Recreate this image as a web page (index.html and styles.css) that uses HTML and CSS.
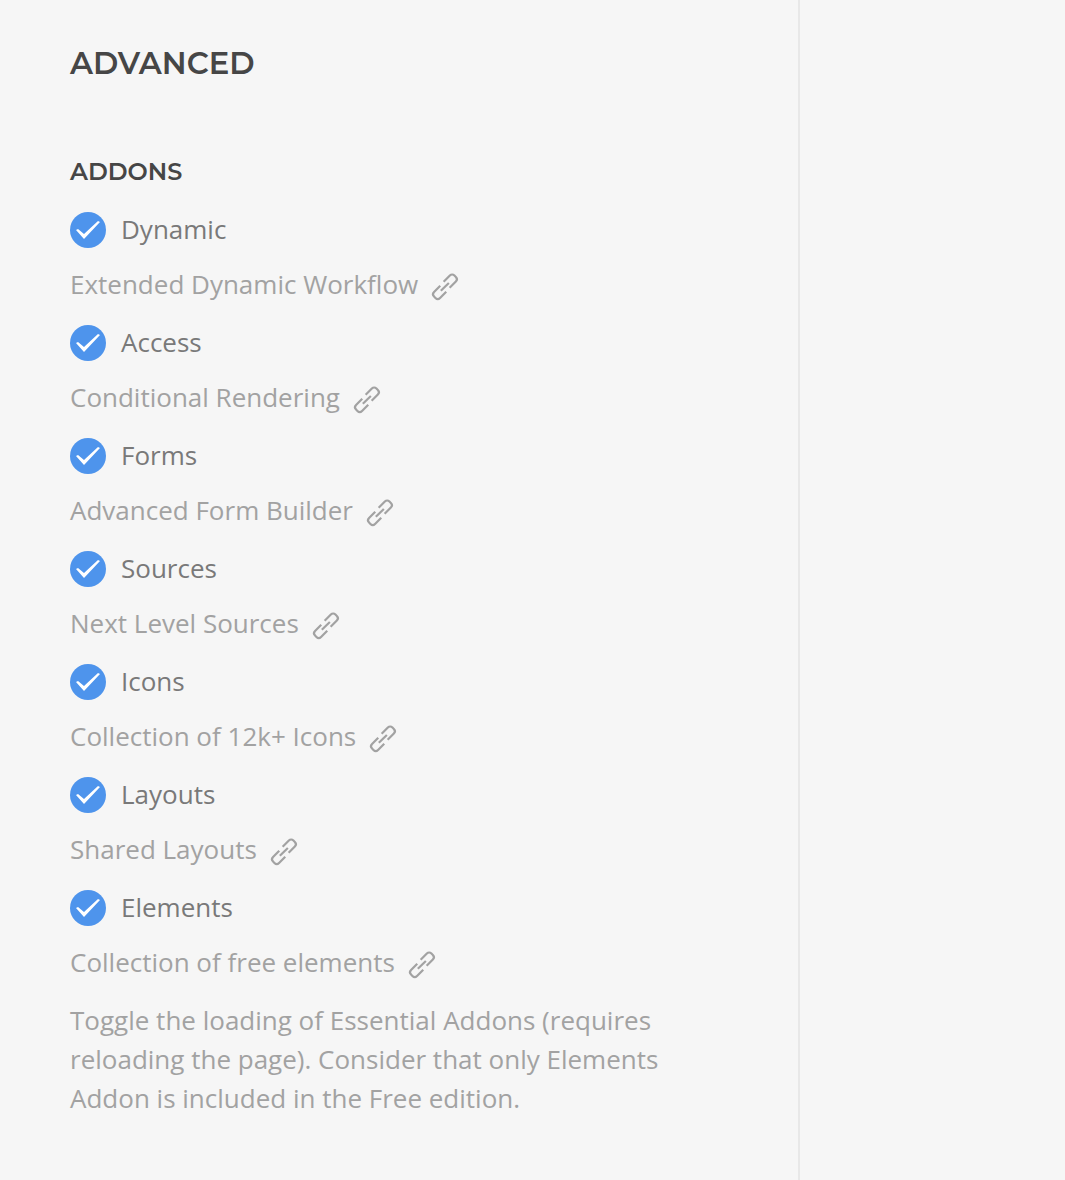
FILE: index.html
```html
<!DOCTYPE html>
<html lang="en">
<head>
<meta charset="utf-8">
<title>Advanced</title>
<link rel="stylesheet" href="styles.css">
</head>
<body>
<svg class="sprite" aria-hidden="true">
  <symbol id="check" viewBox="0 0 36 36"><circle cx="18" cy="18" r="18" fill="#4e94ec"/><path fill="#fff" d="M28 9 14 22l-6-5-2 1 8 9 16-17z"/></symbol>
  <symbol id="link" viewBox="0 0 20 20"><g fill="none" stroke="currentColor" stroke-width="1.1"><path d="M10.625,12.375 L7.525,15.475 C6.825,16.175 5.925,16.175 5.225,15.475 L4.525,14.775 C3.825,14.074 3.825,13.175 4.525,12.475 L7.625,9.375"/><path d="M9.325,7.375 L12.425,4.275 C13.125,3.575 14.025,3.575 14.724,4.275 L15.425,4.975 C16.125,5.675 16.125,6.575 15.425,7.275 L12.325,10.375"/><path d="M7.925,11.875 L11.925,7.975"/></g></symbol>
</svg>
<main class="panel">
  <h1 class="title">ADVANCED</h1>
  <h2 class="subtitle">ADDONS</h2>
  <ul class="addons">
    <li class="addon"><div class="label"><svg class="check"><use href="#check"/></svg><span>Dynamic</span></div><div class="desc"><span>Extended Dynamic Workflow</span><svg class="link"><use href="#link"/></svg></div></li>
    <li class="addon"><div class="label"><svg class="check"><use href="#check"/></svg><span>Access</span></div><div class="desc"><span>Conditional Rendering</span><svg class="link"><use href="#link"/></svg></div></li>
    <li class="addon"><div class="label"><svg class="check"><use href="#check"/></svg><span>Forms</span></div><div class="desc"><span>Advanced Form Builder</span><svg class="link"><use href="#link"/></svg></div></li>
    <li class="addon"><div class="label"><svg class="check"><use href="#check"/></svg><span>Sources</span></div><div class="desc"><span>Next Level Sources</span><svg class="link"><use href="#link"/></svg></div></li>
    <li class="addon"><div class="label"><svg class="check"><use href="#check"/></svg><span>Icons</span></div><div class="desc"><span>Collection of 12k+ Icons</span><svg class="link"><use href="#link"/></svg></div></li>
    <li class="addon"><div class="label"><svg class="check"><use href="#check"/></svg><span>Layouts</span></div><div class="desc"><span>Shared Layouts</span><svg class="link"><use href="#link"/></svg></div></li>
    <li class="addon"><div class="label"><svg class="check"><use href="#check"/></svg><span>Elements</span></div><div class="desc"><span>Collection of free elements</span><svg class="link"><use href="#link"/></svg></div></li>
  </ul>
  <p class="note">Toggle the loading of Essential Addons (requires<br>reloading the page). Consider that only Elements<br>Addon is included in the Free edition.</p>
</main>
</body>
</html>
```
FILE: styles.css
```css
* { box-sizing: border-box; }
body {
  margin: 0;
  background: #f6f6f6;
  color: #a2a2a2;
  font: 26px/39px "Open Sans", "Noto Sans", sans-serif;
}
.sprite { display: none; }
.panel {
  width: 800px;
  height: 1180px;
  padding: 43px 70px 0;
  border-right: 2px solid #e8e8e8;
}
.title, .subtitle {
  margin: 0;
  color: #464646;
  font-family: Montserrat, Inter, sans-serif;
  font-weight: 600;
  white-space: nowrap;
}
.title { font-size: 30.7px; line-height: 40px; }
.subtitle { margin-top: 73px; font-size: 24px; line-height: 32px; }
.addons { margin: 24px 0 0; padding: 0; list-style: none; }
.addon { height: 113px; }
.label { display: flex; align-items: center; gap: 15px; height: 36px; color: #797979; }
.label span { margin-top: -2px; }
.desc { display: flex; align-items: center; height: 39px; margin-top: 17px; }
.check { width: 36px; height: 36px; }
.link { width: 40px; height: 40px; margin: 5px 0 0 7px; flex: none; }
.note { margin: -2px 0 0; white-space: nowrap; }
```
